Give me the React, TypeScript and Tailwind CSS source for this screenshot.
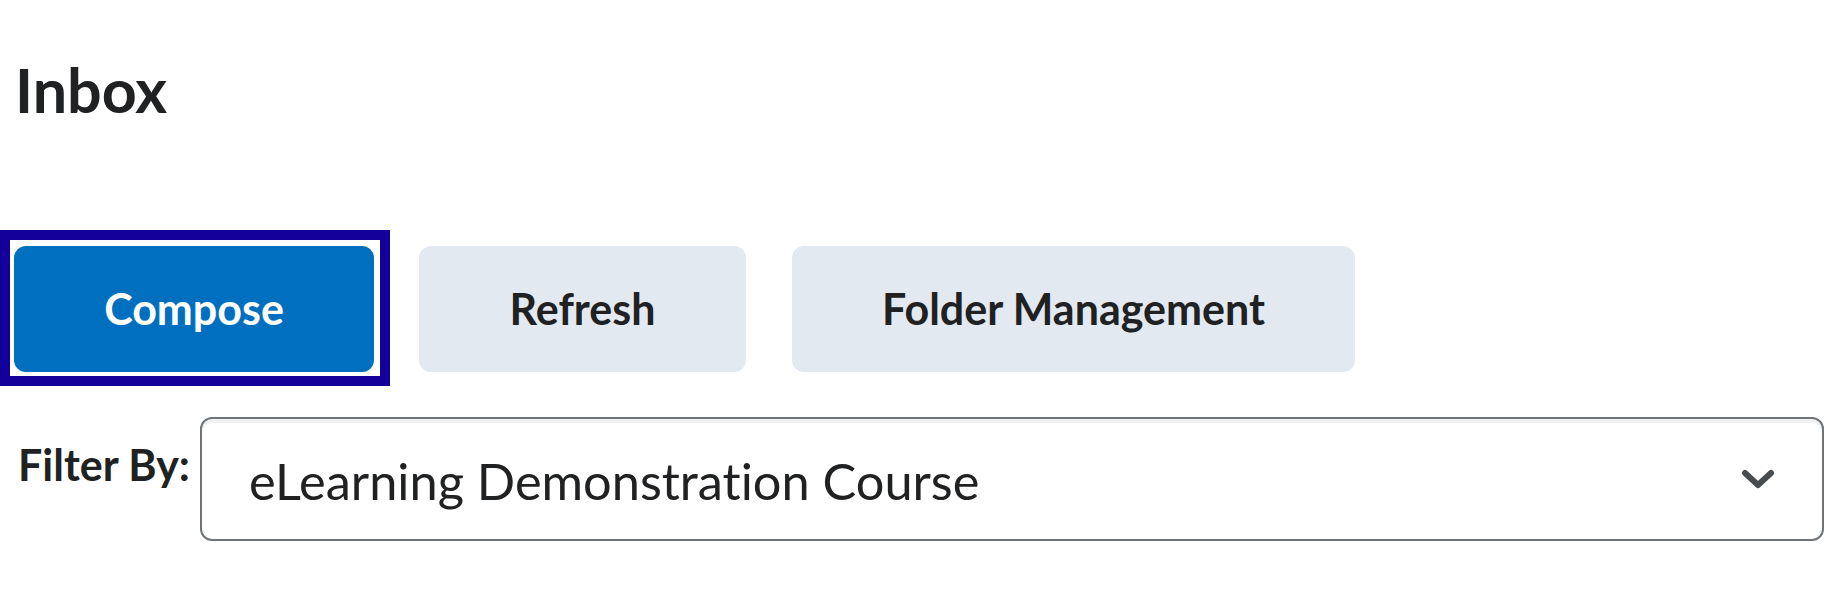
const FONT = "font-['Lato','Noto_Sans',sans-serif] [font-variant-ligatures:none]";

function ChevronDown() {
  return (
    <svg width="34" height="20" viewBox="0 0 34 20" fill="none" className="shrink-0">
      <path d="M4 4 L17 16 L30 4" stroke="#494c4e" strokeWidth="6" strokeLinecap="round" strokeLinejoin="round" />
    </svg>
  );
}

export default function App() {
  return (
    <div className={`${FONT} w-[1826px] h-[596px] bg-white text-[#202122] overflow-hidden`}>
      {/* Page title */}
      <h1 className="pl-[15px] pt-[59px] h-[230px] text-[61px] leading-none font-bold">Inbox</h1>

      {/* Action buttons */}
      <div className="flex items-start">
        <div className="border-[10px] border-[#13009a] pl-[4px] pr-[6px] pt-[6px] pb-[4px]">
          <button className="w-[360px] h-[126px] rounded-[12px] bg-[#006fbf] text-white text-[43px] font-bold">
            Compose
          </button>
        </div>
        <button className="ml-[29px] mt-[16px] w-[327px] h-[126px] rounded-[12px] bg-[#e3e9f1] text-[43px] font-bold">
          Refresh
        </button>
        <button className="ml-[46px] mt-[16px] w-[563px] h-[126px] rounded-[12px] bg-[#e3e9f1] text-[43px] font-bold">
          Folder Management
        </button>
      </div>

      {/* Filter */}
      <div className="flex items-start mt-[31px]">
        <label className="pl-[18px] w-[200px] pt-[25px] text-[43px] font-bold leading-[46px]">Filter By:</label>
        <div className="w-[1624px] h-[124px] rounded-[12px] border-2 border-[#6e7477] shadow-[inset_0_4px_0_0_rgba(181,189,194,0.2)] flex items-center justify-between pl-[47px] pr-[47px]">
          <span className="text-[50.5px] pt-[4px]">eLearning Demonstration Course</span>
          <ChevronDown />
        </div>
      </div>
    </div>
  );
}
